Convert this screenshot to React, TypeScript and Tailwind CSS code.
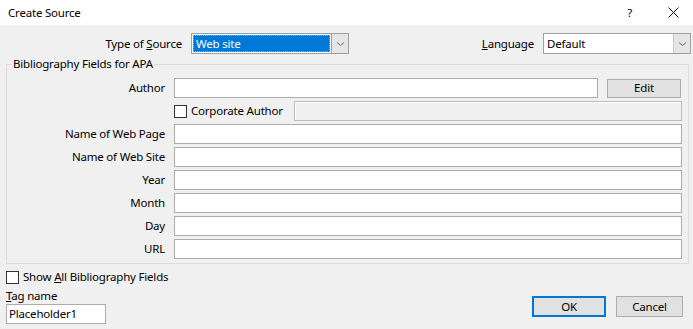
import React from "react";

const font = { fontFamily: '"Noto Sans", "Open Sans", sans-serif' };

function Chevron() {
  return (
    <svg width="9" height="6" viewBox="0 0 9 6" className="block">
      <path d="M1 1.5 L4.5 4.5 L8 1.5" fill="none" stroke="#6d6d6d" strokeWidth="1" />
    </svg>
  );
}

function Row({ label, children }: { label: React.ReactNode; children?: React.ReactNode }) {
  return (
    <div className="flex h-[20px] items-center">
      <div className="w-[158px] pr-0 text-right leading-[16px]">{label}</div>
      <div className="ml-[9px] flex h-[20px] flex-1 items-center">{children}</div>
    </div>
  );
}

function TextBox({ className = "" }: { className?: string }) {
  return <div className={"h-[20px] border border-[#acacac] bg-white " + className} />;
}

export default function App() {
  return (
    <div
      className="relative h-[329px] w-[693px] overflow-hidden bg-[#f0f0f0] text-[11.5px] tracking-[-0.2px] text-black"
      style={font}
    >
      {/* Title bar */}
      <div className="flex h-[25px] items-center bg-white pl-[8px]">
        <span className="leading-[16px]">Create Source</span>
        <span className="ml-auto mr-[36px] leading-[16px]">?</span>
        <svg width="11" height="11" viewBox="0 0 11 11" className="mr-[14px]">
          <path d="M0.5 0.5 L10.5 10.5 M10.5 0.5 L0.5 10.5" stroke="#111" strokeWidth="1" />
        </svg>
      </div>

      {/* Type of source / Language row */}
      <div className="mt-[8px] flex h-[21px] items-center">
        <div className="w-[182px] text-right leading-[16px]">
          Type of <u>S</u>ource
        </div>
        <div className="ml-[9px] flex h-[21px] w-[158px] border border-[#a0a0a0] bg-white">
          <div className="flex flex-1 items-stretch p-[1px]">
            <div className="flex flex-1 items-center border border-dotted border-[#f7a04a] bg-[#0078d7] pl-[2px] leading-[16px] text-white">
              Web site
            </div>
          </div>
          <div className="flex w-[17px] items-center justify-center border-l border-[#a0a0a0] bg-[#e5e5e5]">
            <Chevron />
          </div>
        </div>
        <div className="ml-auto text-right leading-[16px]">
          <u>L</u>anguage
        </div>
        <div className="ml-[9px] mr-[2px] flex h-[21px] w-[148px] border border-[#a0a0a0] bg-white">
          <div className="flex flex-1 items-center pl-[3px] leading-[16px]">Default</div>
          <div className="flex w-[17px] items-center justify-center border-l border-[#c8c8c8] bg-[#e5e5e5]">
            <Chevron />
          </div>
        </div>
      </div>

      {/* Group box */}
      <div className="relative ml-[6px] mt-[10px] w-[683px] border border-[#dcdcdc] pb-[4px] pr-[6px] pt-[13px]">
        <span className="absolute -top-[9px] left-[5px] bg-[#f0f0f0] px-[1px] leading-[16px]">
          Bibliography Fields for APA
        </span>
        <div className="flex flex-col gap-[3px]">
          <Row label="Author">
            <TextBox className="w-[424px]" />
            <div className="ml-[9px] flex h-[19px] w-[74px] items-center justify-center border border-[#adadad] bg-[#e1e1e1] leading-[16px]">
              Edit
            </div>
          </Row>
          <Row label="">
            <div className="h-[13px] w-[13px] border border-[#333] bg-white" />
            <span className="ml-[4px] leading-[16px]">Corporate Author</span>
            <div className="ml-auto h-[20px] w-[388px] border border-[#bcbcbc] bg-[#f0f0f0] shadow-[inset_1px_1px_0_#ffffff]" />
          </Row>
          <Row label="Name of Web Page">
            <TextBox className="flex-1" />
          </Row>
          <Row label="Name of Web Site">
            <TextBox className="flex-1" />
          </Row>
          <Row label="Year">
            <TextBox className="flex-1" />
          </Row>
          <Row label="Month">
            <TextBox className="flex-1" />
          </Row>
          <Row label="Day">
            <TextBox className="flex-1" />
          </Row>
          <Row label="URL">
            <TextBox className="flex-1" />
          </Row>
        </div>
      </div>

      {/* Bottom area */}
      <div className="flex items-end pl-[6px]">
        <div className="flex flex-col">
          <div className="mt-[5px] flex h-[16px] items-center">
            <div className="h-[13px] w-[13px] border border-[#333] bg-white" />
            <span className="ml-[4px] leading-[16px]">
              Show <u>A</u>ll Bibliography Fields
            </span>
          </div>
          <div className="mt-[3px] leading-[16px]">
            <u>T</u>ag name
          </div>
          <div className="flex h-[20px] w-[100px] items-center border border-[#acacac] bg-white pl-[2px] leading-[16px]">
            Placeholder1
          </div>
        </div>
        <div className="mb-[7px] ml-auto mr-[10px] flex gap-[10px]">
          <div className="flex h-[21px] w-[74px] items-center justify-center border-2 border-[#0078d7] bg-[#e1e1e1] leading-[16px]">
            OK
          </div>
          <div className="flex h-[21px] w-[67px] items-center justify-center border border-[#adadad] bg-[#e1e1e1] leading-[16px]">
            Cancel
          </div>
        </div>
      </div>
    </div>
  );
}
